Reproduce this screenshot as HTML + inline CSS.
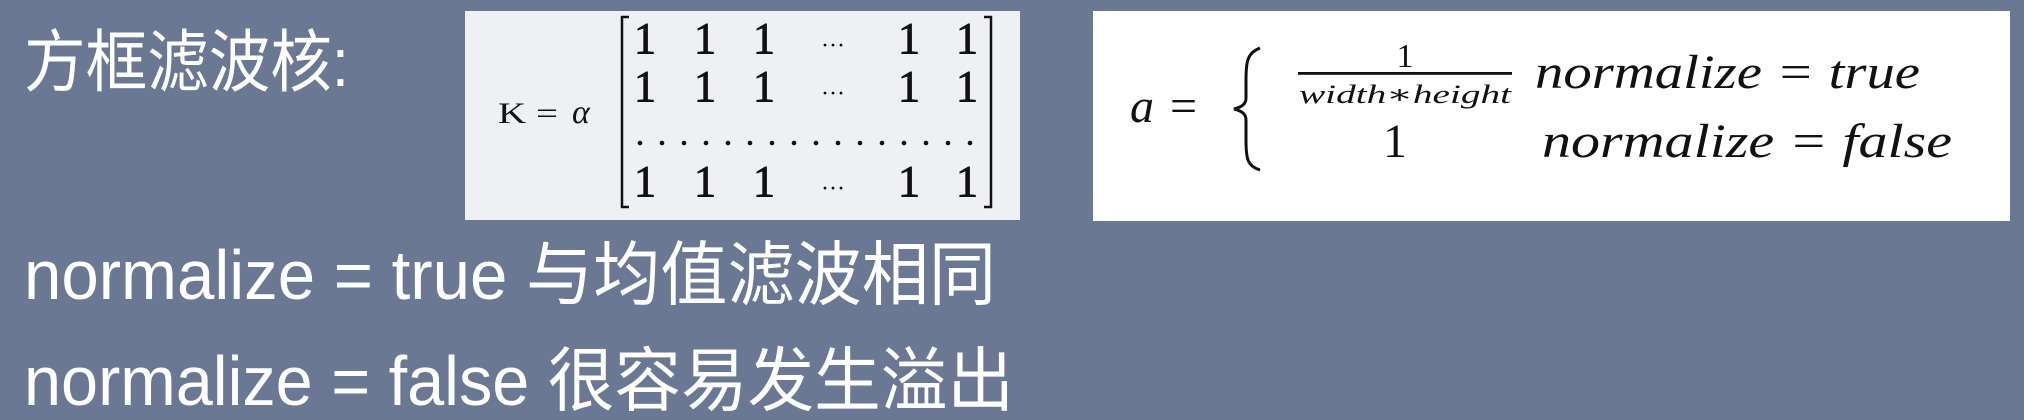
<!DOCTYPE html>
<html><head><meta charset="utf-8"><style>
html,body{margin:0;padding:0;width:2024px;height:420px;overflow:hidden;background:#6b7893}
svg{display:block}
.w{fill:#fff;font-family:"Liberation Sans","Noto Sans CJK SC",sans-serif}
.s{font-family:"Liberation Serif","DejaVu Serif",serif;fill:#111}
</style></head><body>
<svg width="2024" height="420" viewBox="0 0 2024 420" xmlns="http://www.w3.org/2000/svg">
<rect width="2024" height="420" fill="#6b7893"/>
<text class="w" x="24" y="86" font-size="68" textLength="325" lengthAdjust="spacingAndGlyphs">方框滤波核:</text>
<text class="w" x="24" y="299" font-size="70" textLength="972" lengthAdjust="spacingAndGlyphs">normalize = true 与均值滤波相同</text>
<text class="w" x="24" y="405" font-size="70" textLength="990" lengthAdjust="spacingAndGlyphs">normalize = false 很容易发生溢出</text>

<rect x="465" y="11" width="555" height="209" fill="#eef0f3"/>
<g class="s">
<text x="498" y="123" font-size="30" textLength="60" lengthAdjust="spacingAndGlyphs">K =</text>
<text x="572" y="123" font-size="34" font-style="italic">α</text>
<g font-size="44" text-anchor="middle" stroke="#111" stroke-width="0.9">
<text y="53"><tspan x="645">1</tspan><tspan x="705">1</tspan><tspan x="764">1</tspan><tspan x="833" font-size="24" stroke-width="0">···</tspan><tspan x="909">1</tspan><tspan x="967">1</tspan></text>
<text y="101"><tspan x="645">1</tspan><tspan x="705">1</tspan><tspan x="764">1</tspan><tspan x="833" font-size="24" stroke-width="0">···</tspan><tspan x="909">1</tspan><tspan x="967">1</tspan></text>
<text y="196"><tspan x="645">1</tspan><tspan x="705">1</tspan><tspan x="764">1</tspan><tspan x="833" font-size="24" stroke-width="0">···</tspan><tspan x="909">1</tspan><tspan x="967">1</tspan></text>
</g>
</g>
<g fill="#111">
<circle cx="640" cy="143" r="2.3"/><circle cx="662" cy="143" r="2.3"/><circle cx="684" cy="143" r="2.3"/><circle cx="706" cy="143" r="2.3"/><circle cx="728" cy="143" r="2.3"/><circle cx="750" cy="143" r="2.3"/><circle cx="772" cy="143" r="2.3"/><circle cx="794" cy="143" r="2.3"/><circle cx="816" cy="143" r="2.3"/><circle cx="838" cy="143" r="2.3"/><circle cx="860" cy="143" r="2.3"/><circle cx="882" cy="143" r="2.3"/><circle cx="904" cy="143" r="2.3"/><circle cx="926" cy="143" r="2.3"/><circle cx="948" cy="143" r="2.3"/><circle cx="970" cy="143" r="2.3"/>
</g>
<path d="M629 17H622V207H629M984 17H991V207H984" fill="none" stroke="#111" stroke-width="2.5"/>

<rect x="1093" y="11" width="917" height="210" fill="#fff"/>
<g class="s">
<text x="1130" y="122" font-size="48" font-style="italic">a</text>
<text x="1170" y="122" font-size="48">=</text>
<path d="M1260 48C1247 53 1246 62 1246 80V98C1246 104 1242 107 1234 109C1242 111 1246 114 1246 120V140C1246 158 1247 166 1260 170" fill="none" stroke="#111" stroke-width="3"/>
<text x="1405" y="67" font-size="34" text-anchor="middle">1</text>
<rect x="1298" y="72" width="214" height="2.8" fill="#111"/>
<text x="1405" y="103" font-size="26" font-style="italic" text-anchor="middle" textLength="212" lengthAdjust="spacingAndGlyphs">width∗height</text>
<text x="1395" y="157" font-size="48" text-anchor="middle">1</text>
<text x="1535" y="88" font-size="48" font-style="italic" textLength="385" lengthAdjust="spacingAndGlyphs">normalize = true</text>
<text x="1542" y="157" font-size="48" font-style="italic" textLength="410" lengthAdjust="spacingAndGlyphs">normalize = false</text>
</g>
</svg>
</body></html>
